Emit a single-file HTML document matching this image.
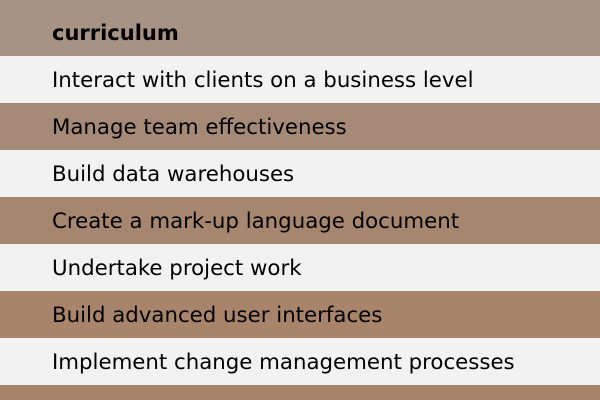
<!DOCTYPE html>
<html><head><style>
html,body{margin:0;width:600px;height:400px;overflow:hidden}
body{font-family:"DejaVu Sans",Verdana,sans-serif;font-size:21.3px;color:#000}
div{height:47px;line-height:49px;padding-left:52px;box-sizing:border-box;white-space:nowrap}
.h{height:56px;line-height:66px;font-weight:bold;font-size:21px;background:#a69383}
.w{background:#f2f2f2}
</style></head><body>
<div class="h">curriculum</div>
<div class="w">Interact with clients on a business level</div>
<div style="background:#a58a78">Manage team effectiveness</div>
<div class="w">Build data warehouses</div>
<div style="background:#a6866f">Create a mark-up language document</div>
<div class="w">Undertake project work</div>
<div style="background:#a7846a">Build advanced user interfaces</div>
<div class="w">Implement change management processes</div>
<div style="background:#a88569;height:15px"></div>
</body></html>
